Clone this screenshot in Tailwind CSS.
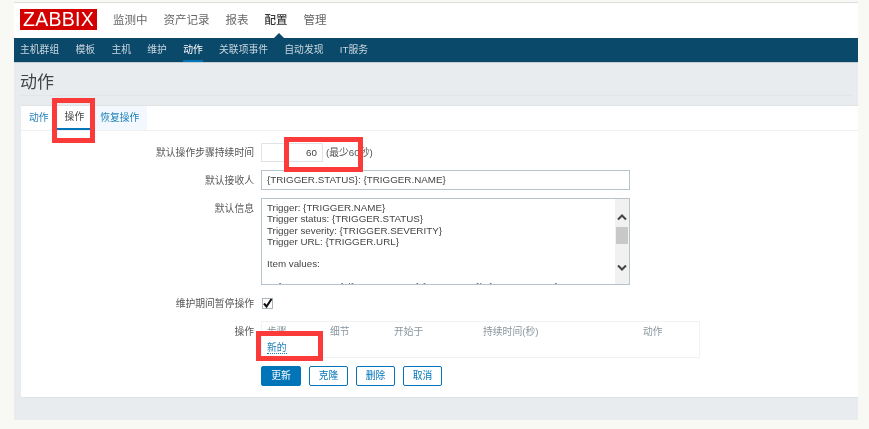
<!DOCTYPE html>
<html lang="zh">
<head>
  <meta charset="UTF-8">
  <title>动作</title>
  <script src="https://cdn.jsdelivr.net/npm/@tailwindcss/browser@4"></script>
</head>
<body class="relative h-[429px] w-[869px] overflow-hidden bg-[#f8f9f4] font-['Liberation_Sans','Noto_Sans_CJK_SC',sans-serif] text-[9.8px] text-[#555]">
  <div class="ml-[14px] mt-[2px] flex h-[418px] w-[844px] flex-col border-t border-[#ddd] bg-[#e9ecef] blur-[0.35px]">
    <!-- top menu -->
    <header class="flex h-[35px] shrink-0 items-center bg-white pl-[6px]">
      <div class="mb-[2px] flex h-[21px] w-[77px] items-center justify-center bg-[#d40000] text-[19.5px] leading-none tracking-[0.3px] text-white">ZABBIX</div>
      <nav class="ml-[16px] flex gap-[16px] text-[11.5px] text-[#666]">
        <span>监测中</span>
        <span>资产记录</span>
        <span>报表</span>
        <span class="font-medium text-[#333]">配置</span>
        <span>管理</span>
      </nav>
    </header>
    <nav class="relative flex h-[25px] shrink-0 items-center gap-[16.3px] border-b border-[#c5ced4] bg-[#0b496b] pl-[6px] pt-px text-[#c9d6de]">
      <span>主机群组</span>
      <span>模板</span>
      <span>主机</span>
      <span>维护</span>
      <span class="relative text-white">动作<span class="absolute inset-x-0 top-[17px] h-[2px] bg-[#0275b8]"></span></span>
      <span>关联项事件</span>
      <span>自动发现</span>
      <span>IT服务</span>
      <span class="absolute left-[260px] top-[-5px] size-0 border-x-[5px] border-b-[5px] border-x-transparent border-b-[#0b496b]"></span>
    </nav>
    <div class="mx-[6px] flex h-[33px] shrink-0 items-center border-b border-[#e2e6e9] pt-[7px] text-[17px] text-[#444]">动作</div>
    <!-- card -->
    <main class="ml-[7px] mt-[9px] h-[293px] border-y border-[#dfe3e6] bg-white">
      <div class="flex h-[25px] border-b border-[#eef0f2] pl-[8px] text-[#1f7fb8]">
        <span class="flex items-center pr-[8px] pt-px">动作</span>
        <span class="flex items-center border-b-2 border-[#0275b8] px-[8px] pt-px text-[#444]">操作</span>
        <span class="flex items-center bg-[#f2f8fd] px-[8px] pt-px">恢复操作</span>
      </div>
      <div class="mt-[12px] grid grid-cols-[233px_1fr] gap-x-[7px]">
        <label class="flex h-[19px] items-center justify-end pt-[2px]">默认操作步骤持续时间</label>
        <div class="flex h-[19px] items-center gap-[3px]">
          <input value="60" class="h-[19px] w-[62px] border border-[#dfe4e7] px-[5px] pb-px text-right text-[9.8px] text-[#444]">
          <span class="pt-px">(最少60秒)</span>
        </div>

        <label class="mt-[8px] flex h-[20px] items-center justify-end pt-[2px]">默认接收人</label>
        <input value="{TRIGGER.STATUS}: {TRIGGER.NAME}" class="mt-[8px] h-[20px] w-[369px] border border-[#b7c4cb] px-[5px] pb-px text-[9.8px] text-[#444]">

        <label class="mt-[8px] pt-[4px] text-right">默认信息</label>
        <div class="mt-[8px] flex h-[87px] w-[369px] overflow-hidden border border-[#b7c4cb]">
          <div class="flex-1 overflow-hidden whitespace-pre px-[5px] pt-[3px] text-[9.8px] leading-[11.3px] text-[#444]">Trigger: {TRIGGER.NAME}
Trigger status: {TRIGGER.STATUS}
Trigger severity: {TRIGGER.SEVERITY}
Trigger URL: {TRIGGER.URL}

Item values:

1. {ITEM.NAME1} ({HOST.NAME1}:{ITEM.KEY1}): {ITEM.VALUE1}</div>
          <div class="relative w-[14px] bg-[#f1f1f1]">
            <svg class="absolute left-[2px] top-[15px]" width="10" height="7" viewBox="0 0 10 7"><path d="M1 5.5 5 1.5 9 5.5" fill="none" stroke="#444" stroke-width="2"/></svg>
            <div class="absolute left-[1px] top-[28px] h-[17px] w-[12px] bg-[#c8c8c8]"></div>
            <svg class="absolute left-[2px] top-[65px]" width="10" height="7" viewBox="0 0 10 7"><path d="M1 1.5 5 5.5 9 1.5" fill="none" stroke="#444" stroke-width="2"/></svg>
          </div>
        </div>

        <label class="mt-[12px] flex h-[13px] items-center justify-end pt-[2px]">维护期间暂停操作</label>
        <div class="mt-[12px] flex h-[13px] items-center pl-px">
          <div class="flex size-[11px] items-center justify-center border border-[#a9b6bd]">
            <svg class="shrink-0" width="11" height="11" viewBox="0 0 11 11"><path d="M2 5.5 4.5 8.5 9.5 1" fill="none" stroke="#111" stroke-width="2"/></svg>
          </div>
        </div>

        <label class="mt-[11px] pt-[4px] text-right">操作</label>
        <div class="mt-[11px] h-[37px] w-[439px] border border-[#f0f2f3] pl-[5px] pt-[3px]">
          <div class="flex h-[15px] items-center text-[#8a979e]">
            <span class="w-[63px]">步骤</span>
            <span class="w-[64px]">细节</span>
            <span class="w-[89px]">开始于</span>
            <span class="w-[160px]">持续时间(秒)</span>
            <span>动作</span>
          </div>
          <div class="flex h-[15px] items-center text-[#1f7fb8]"><span class="border-b border-dotted border-[#1f7fb8] leading-[11px]">新的</span></div>
        </div>

        <div></div>
        <div class="mt-[8px] flex gap-[8px] text-[#0275b8]">
          <button class="h-[20px] w-[40px] rounded-[2px] border border-[#0275b8] bg-[#0275b8] text-white">更新</button>
          <button class="h-[20px] w-[39px] rounded-[2px] border border-[#0275b8]">克隆</button>
          <button class="h-[20px] w-[39px] rounded-[2px] border border-[#0275b8]">删除</button>
          <button class="h-[20px] w-[39px] rounded-[2px] border border-[#0275b8]">取消</button>
        </div>
      </div>
    </main>
  </div>
  <!-- red annotation boxes drawn over the screenshot -->
  <div class="absolute left-[52px] top-[98px] h-[45px] w-[43px] border-[5px] border-[#fb3a3a]"></div>
  <div class="absolute left-[284px] top-[137px] h-[35px] w-[79px] border-[5px] border-[#fb3a3a]"></div>
  <div class="absolute left-[256px] top-[331px] h-[30px] w-[67px] border-[5px] border-[#fb3a3a]"></div>
</body>
</html>
